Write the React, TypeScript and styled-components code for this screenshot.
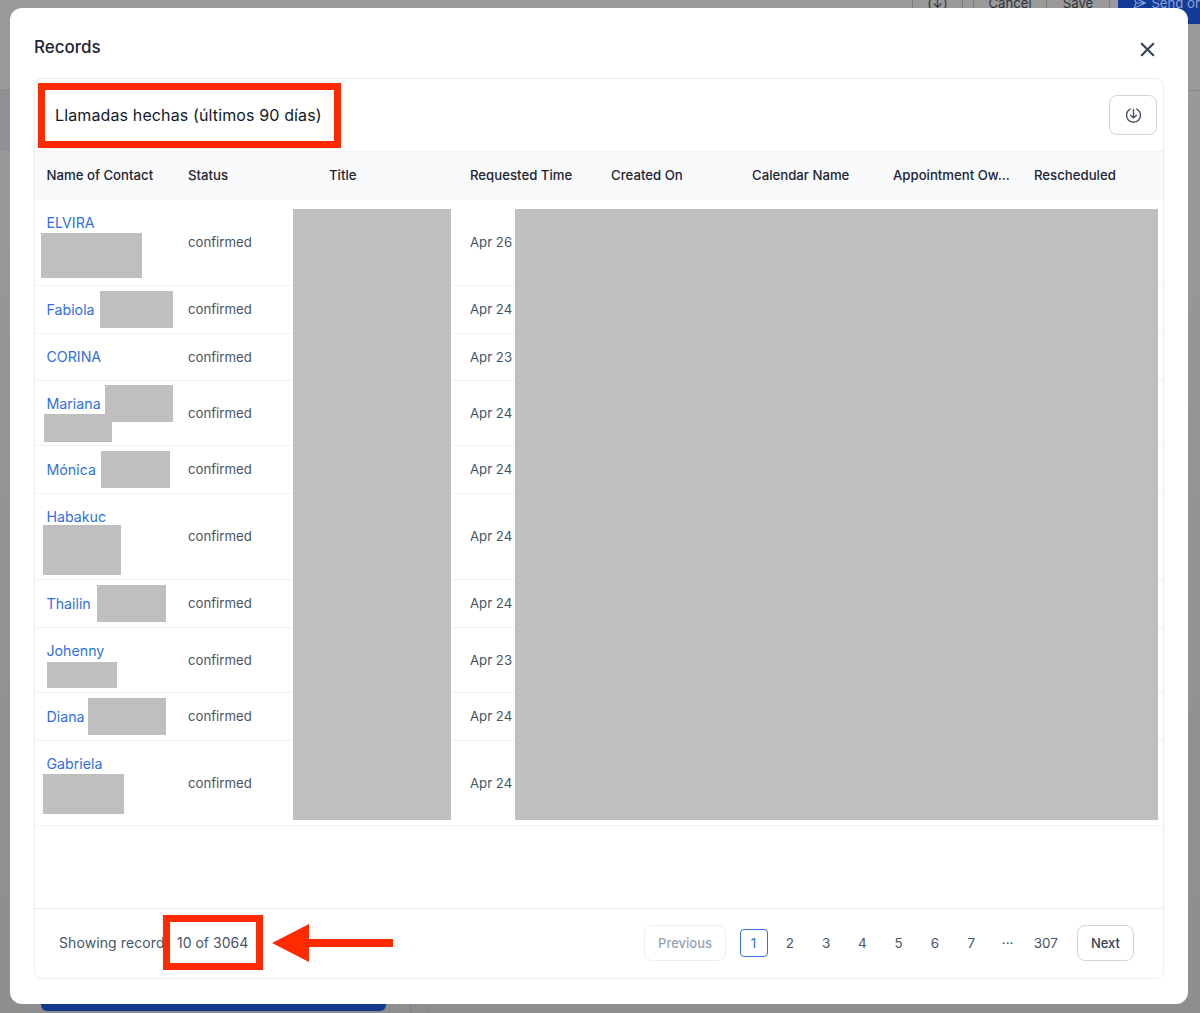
import styled, { createGlobalStyle } from "styled-components";
import { X } from "lucide-react";

const GlobalStyle = createGlobalStyle`
  html, body {
    margin: 0;
    padding: 0;
    background: #8f8f8f;
    font-family: Inter, "Liberation Sans", sans-serif;
  }
  * {
    box-sizing: border-box;
  }
`;

const rows = [
  { name: "ELVIRA", date: "Apr 26", height: 86, align: "start" },
  { name: "Fabiola", date: "Apr 24", height: 48, align: "center" },
  { name: "CORINA", date: "Apr 23", height: 47, align: "center" },
  { name: "Mariana", date: "Apr 24", height: 65, align: "start" },
  { name: "Mónica", date: "Apr 24", height: 48, align: "center" },
  { name: "Habakuc", date: "Apr 24", height: 86, align: "start" },
  { name: "Thailin", date: "Apr 24", height: 48, align: "center" },
  { name: "Johenny", date: "Apr 23", height: 65, align: "start" },
  { name: "Diana", date: "Apr 24", height: 48, align: "center" },
  { name: "Gabriela", date: "Apr 24", height: 85, align: "start" },
];

const columns = [
  "Name of Contact",
  "Status",
  "Title",
  "Requested Time",
  "Created On",
  "Calendar Name",
  "Appointment Ow…",
  "Rescheduled",
];

// grey blocks painted over private data, in page coordinates
const redactions = [
  [293, 209, 158, 611],
  [515, 209, 643, 611],
  [41, 233, 101, 45],
  [100, 291, 73, 37],
  [105, 385, 68, 37],
  [44, 414, 68, 28],
  [101, 451, 69, 37],
  [43, 525, 78, 50],
  [97, 585, 69, 37],
  [47, 662, 70, 26],
  [88, 698, 78, 37],
  [43, 774, 81, 40],
];

const pages = ["1", "2", "3", "4", "5", "6", "7", "···", "307"];

export default function App() {
  return (
    <Page>
      <GlobalStyle />
      <BehindTop>
        <BehindIcon>(↓)</BehindIcon>
        <BehindLabel>Cancel</BehindLabel>
        <BehindLabel>Save</BehindLabel>
        <BehindSend>
          <svg width="15" height="14" viewBox="0 0 15 14" fill="none" stroke="#8da4d8" strokeWidth="1.2" strokeLinejoin="round">
            <path d="M1 1l13 6-13 6 2.5-6zM3.5 7H14" />
          </svg>
          Send or
        </BehindSend>
      </BehindTop>
      <BehindLine />
      <BehindTint />
      <BehindBar />
      <BehindGutter />

      <Modal>
        <ModalHead>
          <ModalTitle>Records</ModalTitle>
          <CloseButton>
            <X size={23} strokeWidth={2.2} />
          </CloseButton>
        </ModalHead>

        <Card>
          <CardHead>
            <CardTitle>Llamadas hechas (últimos 90 días)</CardTitle>
            <DownloadButton>
              <svg width="17" height="17" viewBox="0 0 17 17" fill="none" stroke="#475467" strokeWidth="1.4" strokeLinecap="round" strokeLinejoin="round">
                <path d="M5.2 2.1a7 7 0 1 0 6.6 0" />
                <path d="M8.5 2.5v8.5M5.6 8.2l2.9 2.9 2.9-2.9" />
              </svg>
            </DownloadButton>
          </CardHead>

          <HeadRow>
            {columns.map((c) => (
              <HeadCell key={c}>{c}</HeadCell>
            ))}
          </HeadRow>

          <Body>
            {rows.map((r) => (
              <Row key={r.name} $height={r.height}>
                <NameCell $align={r.align}>{r.name}</NameCell>
                <Cell>confirmed</Cell>
                <Cell />
                <Cell>{r.date}</Cell>
                <Cell />
                <Cell />
                <Cell />
                <Cell />
              </Row>
            ))}
          </Body>

          <Footer>
            <Showing>Showing records</Showing>
            <Pager>
              <PrevButton>Previous</PrevButton>
              <PageList>
                {pages.map((p) => (
                  <PageItem key={p} $active={p === "1"} $wide={p === "307"}>
                    {p}
                  </PageItem>
                ))}
              </PageList>
              <NextButton>Next</NextButton>
            </Pager>
          </Footer>
        </Card>
      </Modal>

      {redactions.map(([x, y, w, h]) => (
        <Redaction key={`${x}-${y}`} style={{ left: x, top: y, width: w, height: h }} />
      ))}

      <TitleMark />
      <CountMark>10 of 3064</CountMark>
      <Arrow width="122" height="38" viewBox="0 0 122 38">
        <path d="M0 19 37 0v15h84v8H37v15z" fill="#ff2a00" />
      </Arrow>
    </Page>
  );
}

const Page = styled.div`
  position: relative;
  width: 1200px;
  height: 1013px;
  overflow: hidden;
  padding: 8px 12px 9px 10px;
  background: linear-gradient(180deg, #9a9a9a, #8e8e8e);
`;

const BehindTop = styled.div`
  position: absolute;
  top: -7px;
  right: 0;
  display: flex;
  align-items: flex-start;
  height: 31px;
  font-size: 13.2px;
  line-height: 20px;
  color: #2f333a;
`;

const BehindIcon = styled.div`
  width: 51px;
  height: 20px;
  margin-right: 10px;
  text-align: center;
  border-left: 1px solid #7c7c7c;
  border-right: 1px solid #7c7c7c;
`;

const BehindLabel = styled.div`
  width: 73px;
  height: 20px;
  text-align: center;
  border-left: 1px solid #7c7c7c;

  & + & {
    width: 64px;
    border-right: 1px solid #7c7c7c;
  }
`;

const BehindSend = styled.div`
  display: flex;
  align-items: flex-start;
  gap: 5px;
  width: 82px;
  height: 31px;
  margin-left: 8px;
  padding: 3px 0 0 15px;
  line-height: 14px;
  white-space: nowrap;
  overflow: hidden;
  color: #8da4d8;
  background: #123a96;
`;

const BehindLine = styled.div`
  position: absolute;
  left: 0;
  right: 0;
  top: 90px;
  height: 1px;
  background: #868686;
`;

const BehindTint = styled.div`
  position: absolute;
  left: 0;
  top: 91px;
  width: 10px;
  height: 60px;
  background: #8f9197;
`;

const BehindBar = styled.div`
  position: absolute;
  left: 41px;
  top: 996px;
  width: 345px;
  height: 15px;
  border-radius: 6px;
  background: #143a8f;
`;

const BehindGutter = styled.div`
  position: absolute;
  left: 410px;
  top: 1000px;
  width: 19px;
  height: 13px;
  border-left: 1px solid #808080;
  border-right: 1px solid #858585;
`;

const Modal = styled.div`
  position: relative;
  height: 996px;
  padding: 0 24px;
  background: #fff;
  border-radius: 12px;
`;

const ModalHead = styled.div`
  display: flex;
  align-items: center;
  justify-content: space-between;
  height: 70px;
`;

const ModalTitle = styled.div`
  margin-top: 8px;
  font-size: 17px;
  font-weight: 500;
  color: #1d2433;
`;

const CloseButton = styled.div`
  display: flex;
  margin: 13px 5px 0 0;
  color: #344054;
`;

const Card = styled.div`
  display: flex;
  flex-direction: column;
  height: 901px;
  border: 1px solid #eaecf0;
  border-radius: 8px;
`;

const CardHead = styled.div`
  display: flex;
  align-items: center;
  justify-content: space-between;
  height: 73px;
  padding: 0 6px 0 20px;
  border-bottom: 1px solid #f0f1f3;
`;

const CardTitle = styled.div`
  font-size: 16px;
  letter-spacing: 0.13px;
  color: #101828;
`;

const DownloadButton = styled.div`
  display: flex;
  align-items: center;
  justify-content: center;
  width: 48px;
  height: 40px;
  border: 1px solid #d0d5dd;
  border-radius: 8px;
`;

const HeadRow = styled.div`
  display: grid;
  grid-template-columns: repeat(8, 141px);
  align-items: center;
  height: 48px;
  padding-bottom: 2px;
  background: #f9fafb;
`;

const HeadCell = styled.div`
  padding-left: 12px;
  font-size: 13.2px;
  font-weight: 500;
  color: #1d2433;
  white-space: nowrap;

  &:first-child {
    padding-left: 11.5px;
  }
`;

const Body = styled.div`
  flex: 1;
`;

const Row = styled.div<{ $height: number }>`
  display: grid;
  grid-template-columns: repeat(8, 141px);
  align-items: center;
  height: ${(p) => p.$height}px;
  padding-bottom: 1px;
  border-bottom: 1px solid #f0f1f3;
`;

const Cell = styled.div`
  padding-left: 12px;
  font-size: 13.2px;
  color: #475467;
`;

const NameCell = styled.div<{ $align: string }>`
  align-self: ${(p) => p.$align};
  padding: ${(p) => (p.$align === "start" ? "13px" : "1px")} 0 0 11.5px;
  font-size: 14.2px;
  line-height: 20px;
  color: #2f6fe0;
`;

const Footer = styled.div`
  display: flex;
  align-items: center;
  justify-content: space-between;
  height: 70px;
  padding: 0 29px 2px 24px;
  border-top: 1px solid #eaecf0;
`;

const Showing = styled.div`
  font-size: 14px;
  letter-spacing: 0.1px;
  color: #475467;
  white-space: nowrap;
`;

const Pager = styled.div`
  display: flex;
  align-items: center;
`;

const PrevButton = styled.div`
  display: flex;
  align-items: center;
  height: 36px;
  padding: 0 13px;
  font-size: 13px;
  font-weight: 500;
  color: #98a2b3;
  border: 1px solid #eaecf0;
  border-radius: 8px;
`;

const NextButton = styled(PrevButton)`
  color: #344054;
  border-color: #d0d5dd;
`;

const PageList = styled.div`
  display: flex;
  align-items: center;
  gap: 8.3px;
  margin: 0 15px 0 13.5px;
`;

const PageItem = styled.div<{ $active: boolean; $wide: boolean }>`
  display: flex;
  align-items: center;
  justify-content: center;
  width: ${(p) => (p.$wide ? "32px" : "28px")};
  height: 28px;
  font-size: 13.5px;
  color: ${(p) => (p.$active ? "#2f6fe0" : "#475467")};
  border: 1px solid ${(p) => (p.$active ? "#2f6fe0" : "transparent")};
  border-radius: 4px;
`;

const Redaction = styled.div`
  position: absolute;
  background: #bfbfbf;
`;

const TitleMark = styled.div`
  position: absolute;
  left: 38px;
  top: 83px;
  width: 303px;
  height: 65px;
  border: 7px solid #ff2a00;
`;

const CountMark = styled.div`
  position: absolute;
  left: 163px;
  top: 915px;
  width: 100px;
  height: 55px;
  padding-left: 7px;
  line-height: 41px;
  font-size: 14px;
  color: #475467;
  background: #fff;
  border: 7px solid #ff2a00;
`;

const Arrow = styled.svg`
  position: absolute;
  left: 272px;
  top: 924px;
`;
